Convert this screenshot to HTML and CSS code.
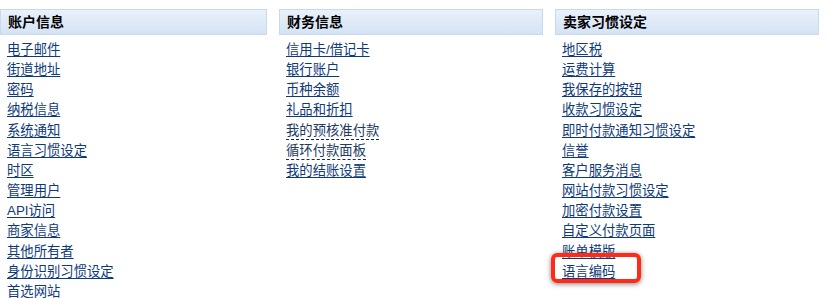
FILE: index.html
```html
<!DOCTYPE html>
<html lang="zh-CN">
<head>
<meta charset="utf-8">
<link rel="stylesheet" href="styles.css">
</head>
<body>
<div class="grid">
  <section class="col">
    <h2 class="head">账户信息</h2>
    <ul class="links">
      <li><a href="#">电子邮件</a></li>
      <li><a href="#">街道地址</a></li>
      <li><a href="#">密码</a></li>
      <li><a href="#">纳税信息</a></li>
      <li><a href="#">系统通知</a></li>
      <li><a href="#">语言习惯设定</a></li>
      <li><a href="#">时区</a></li>
      <li><a href="#">管理用户</a></li>
      <li><a href="#">API访问</a></li>
      <li><a href="#">商家信息</a></li>
      <li><a href="#">其他所有者</a></li>
      <li><a href="#">身份识别习惯设定</a></li>
      <li><a href="#">首选网站</a></li>
    </ul>
  </section>
  <section class="col">
    <h2 class="head">财务信息</h2>
    <ul class="links">
      <li><a href="#">信用卡/借记卡</a></li>
      <li><a href="#">银行账户</a></li>
      <li><a href="#">币种余额</a></li>
      <li><a href="#">礼品和折扣</a></li>
      <li><a href="#" class="dashed">我的预核准付款</a></li>
      <li><a href="#" class="dashed">循环付款面板</a></li>
      <li><a href="#">我的结账设置</a></li>
    </ul>
  </section>
  <section class="col">
    <h2 class="head">卖家习惯设定</h2>
    <ul class="links">
      <li><a href="#">地区税</a></li>
      <li><a href="#">运费计算</a></li>
      <li><a href="#">我保存的按钮</a></li>
      <li><a href="#">收款习惯设定</a></li>
      <li><a href="#">即时付款通知习惯设定</a></li>
      <li><a href="#">信誉</a></li>
      <li><a href="#">客户服务消息</a></li>
      <li><a href="#">网站付款习惯设定</a></li>
      <li><a href="#">加密付款设置</a></li>
      <li><a href="#">自定义付款页面</a></li>
      <li><a href="#">账单模版</a></li>
      <li class="marked"><a href="#">语言编码</a><span class="highlight"></span></li>
    </ul>
  </section>
</div>
</body>
</html>
```

FILE: styles.css
```css
html, body {
  margin: 0;
  padding: 0;
  background: #fff;
}
body {
  font-family: "Liberation Sans", "Noto Sans CJK SC", sans-serif;
  font-size: 13.33px;
  color: #000;
}
.grid {
  display: grid;
  grid-template-columns: 267px 264px 264px;
  column-gap: 12px;
  padding-top: 9px;
}
.head {
  margin: 0;
  height: 24px;
  line-height: 24px;
  padding-left: 7px;
  font-size: 14px;
  font-weight: bold;
  color: #000;
  background: linear-gradient(#e9f1fb, #d4e3f4);
  border: 1px solid #c8d9ee;
}
.links {
  list-style: none;
  margin: 5px 0 0;
  padding: 0 0 0 7px;
}
.links li {
  line-height: 20.17px;
  height: 20.17px;
}
.links a {
  color: #0e3a7a;
  text-decoration: underline;
  text-underline-offset: 2px;
}
.links a.dashed {
  text-decoration: none;
  border-bottom: 1px dashed #1b2a44;
  padding-bottom: 1px;
  color: #223a63;
}
.marked {
  position: relative;
}
.highlight {
  position: absolute;
  left: -11px;
  top: -9px;
  width: 82px;
  height: 22px;
  border: 4px solid #ff2a17;
  border-radius: 6px;
  box-shadow: 0 1px 5px rgba(0, 0, 0, 0.5);
  pointer-events: none;
}
```
